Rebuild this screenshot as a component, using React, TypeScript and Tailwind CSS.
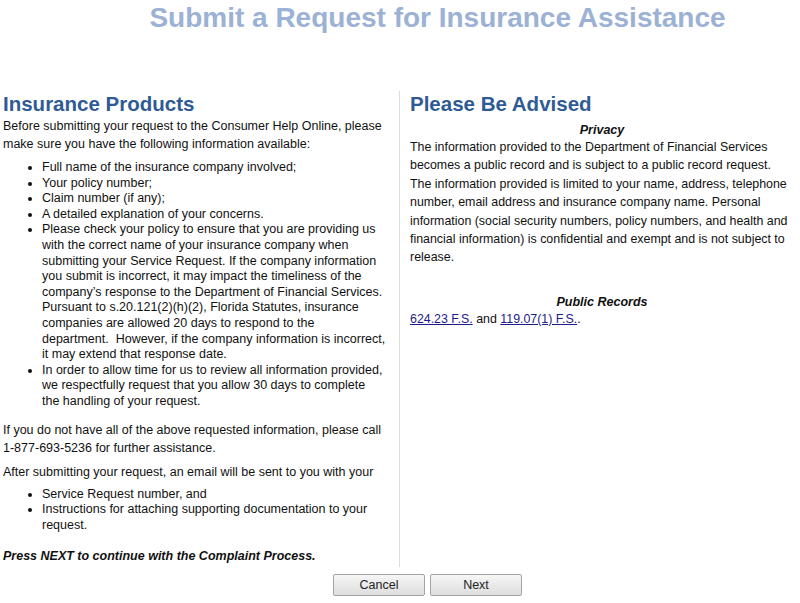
import React from "react";

const font = { fontFamily: '"Liberation Sans", Arial, sans-serif' };

export default function App() {
  return (
    <div className="w-[800px] h-[603px] bg-white text-[#111] overflow-hidden" style={font}>
      <div className="pl-[75px] pt-[1px] text-center">
        <h1 className="text-[28px] leading-[34px] font-bold text-[#9cb2d4]">
          Submit a Request for Insurance Assistance
        </h1>
      </div>
      <div className="flex mt-[56px]">
        <div className="w-[400px] border-r border-[#dcdcdc] pl-[3px] pr-[12px] pb-[2px]">
          <h2 className="text-[20.5px] leading-[25px] font-bold text-[#2f5b95]">Insurance Products</h2>
          <p className="text-[12.5px] leading-[18px] mt-[1px]">
            Before submitting your request to the Consumer Help Online, please make sure you have the following information available:
          </p>
          <ul className="list-disc pl-[39px] text-[12.5px] leading-[15.6px] mt-[7px]">
            <li>Full name of the insurance company involved;</li>
            <li>Your policy number;</li>
            <li>Claim number (if any);</li>
            <li>A detailed explanation of your concerns.</li>
            <li>
              Please check your policy to ensure that you are providing us with the correct name of your insurance company when submitting your Service Request. If the company information you submit is incorrect, it may impact the timeliness of the company’s response to the Department of Financial Services. Pursuant to s.20.121(2)(h)(2), Florida Statutes, insurance companies are allowed 20 days to respond to the department.&nbsp; However, if the company information is incorrect, it may extend that response date.
            </li>
            <li>
              In order to allow time for us to review all information provided, we respectfully request that you allow 30 days to complete
              <br />
              the handling of your request.
            </li>
          </ul>
          <p className="text-[12.5px] leading-[18px] mt-[11px]">
            If you do not have all of the above requested information, please call 1-877-693-5236 for further assistance.
          </p>
          <p className="text-[12.5px] leading-[18px] mt-[6px]">
            After submitting your request, an email will be sent to you with your
          </p>
          <ul className="list-disc pl-[39px] text-[12.5px] leading-[15.6px] mt-[6px]">
            <li>Service Request number, and</li>
            <li>Instructions for attaching supporting documentation to your request.</li>
          </ul>
          <p className="text-[12.5px] leading-[18px] mt-[14px] font-bold italic">
            Press NEXT to continue with the Complaint Process.
          </p>
        </div>
        <div className="flex-1 pl-[10px] pr-[6px]">
          <h2 className="text-[20.5px] leading-[25px] font-bold text-[#2f5b95]">Please Be Advised</h2>
          <div className="text-center text-[12.5px] leading-[16px] font-bold italic mt-[6px]">Privacy</div>
          <p className="text-[12.4px] leading-[18.4px]">
            The information provided to the Department of Financial Services becomes a public record and is subject to a public record request. The information provided is limited to your name, address, telephone number, email address and insurance company name. Personal information (social security numbers, policy numbers, and health and financial information) is confidential and exempt and is not subject to release.
          </p>
          <div className="text-center text-[12.5px] leading-[16px] font-bold italic mt-[27px]">Public Records</div>
          <p className="text-[12.4px] leading-[16px] mt-[1px]">
            <a className="text-[#1c1c8c] underline" href="#">624.23 F.S.</a> and{" "}
            <a className="text-[#1c1c8c] underline" href="#">119.07(1) F.S.</a>.
          </p>
        </div>
      </div>
      <div className="flex justify-center gap-[5px] mt-[7px] pl-[55px]">
        <button className="w-[92px] h-[22px] border border-[#a3a3a3] rounded-[2px] bg-gradient-to-b from-[#f6f6f6] to-[#dedede] text-[12.5px] text-[#222]">
          Cancel
        </button>
        <button className="w-[92px] h-[22px] border border-[#a3a3a3] rounded-[2px] bg-gradient-to-b from-[#f6f6f6] to-[#dedede] text-[12.5px] text-[#222]">
          Next
        </button>
      </div>
    </div>
  );
}
